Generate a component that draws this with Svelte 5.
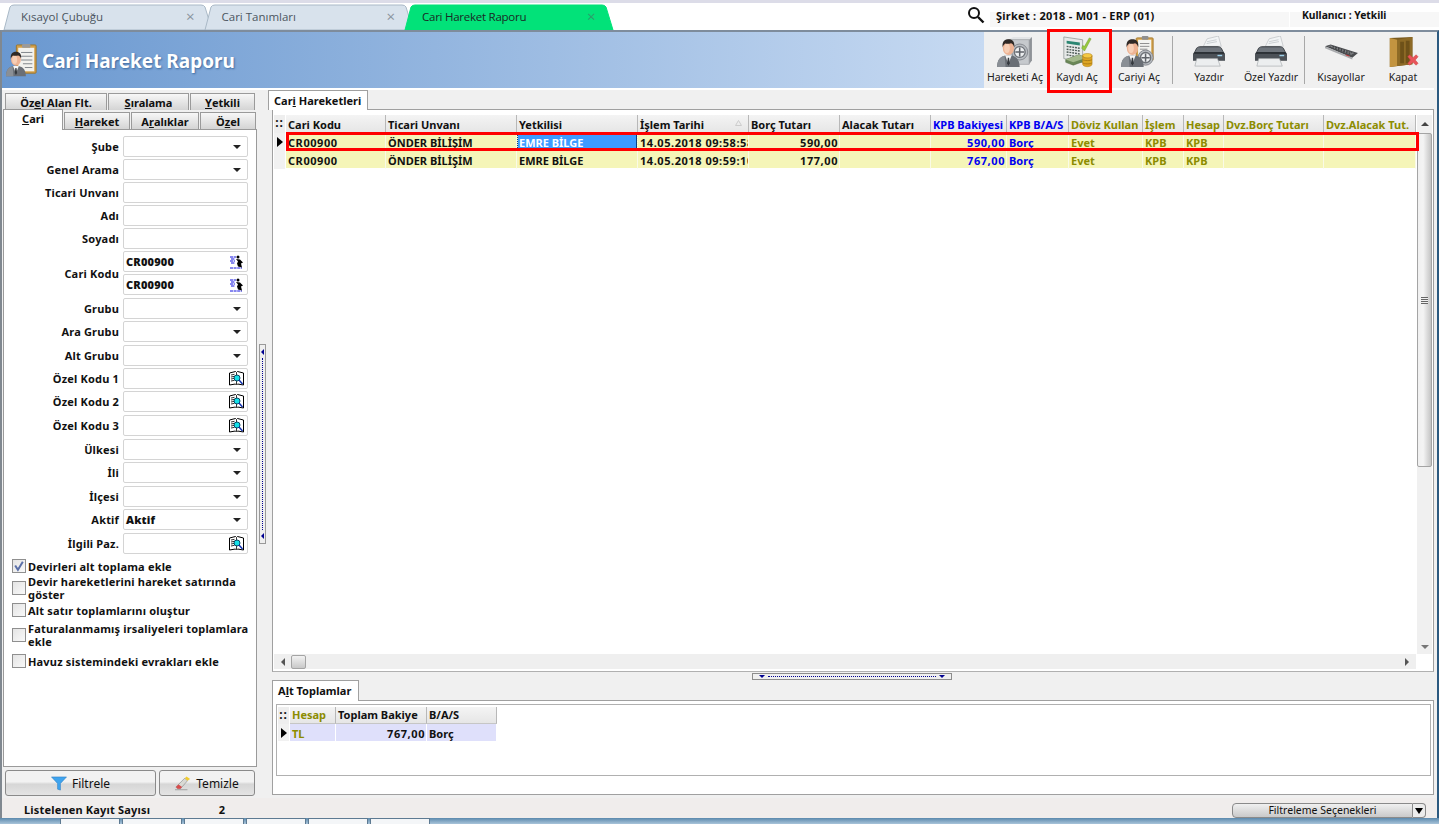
<script>
  const topTabs = [
    { label: 'Kısayol Çubuğu' },
    { label: 'Cari Tanımları' },
    { label: 'Cari Hareket Raporu', active: true }
  ];

  const tools = [
    { label: 'Hareketi Aç', icon: 'safe' },
    { label: 'Kaydı Aç', icon: 'record', marked: true },
    { label: 'Cariyi Aç', icon: 'clipboard' },
    { sep: true },
    { label: 'Yazdır', icon: 'printer' },
    { label: 'Özel Yazdır', icon: 'printer' },
    { sep: true },
    { label: 'Kısayollar', icon: 'keyboard' },
    { label: 'Kapat', icon: 'door' }
  ];

  const fields = [
    { label: 'Şube', kind: 'combo' },
    { label: 'Genel Arama', kind: 'combo' },
    { label: 'Ticari Unvanı' },
    { label: 'Adı' },
    { label: 'Soyadı' },
    { label: 'Cari Kodu', kind: 'pair' },
    { label: 'Grubu', kind: 'combo', extra: true },
    { label: 'Ara Grubu', kind: 'combo' },
    { label: 'Alt Grubu', kind: 'combo', extra: true },
    { label: 'Özel Kodu 1', kind: 'book' },
    { label: 'Özel Kodu 2', kind: 'book' },
    { label: 'Özel Kodu 3', kind: 'book', extra: true },
    { label: 'Ülkesi', kind: 'combo', extra: true },
    { label: 'İli', kind: 'combo' },
    { label: 'İlçesi', kind: 'combo', extra: true },
    { label: 'Aktif', kind: 'combo', value: 'Aktif' },
    { label: 'İlgili Paz.', kind: 'book', extra: true }
  ];

  const checks = [
    { label: 'Devirleri alt toplama ekle', on: true },
    { label: 'Devir hareketlerini hareket satırında göster' },
    { label: 'Alt satır toplamlarını oluştur' },
    { label: 'Faturalanmamış irsaliyeleri toplamlara ekle' },
    { label: 'Havuz sistemindeki evrakları ekle' }
  ];

  const columns = [
    { title: 'Cari Kodu', key: 'kod', num: true },
    { title: 'Ticari Unvanı', key: 'unvan' },
    { title: 'Yetkilisi', key: 'yetkili' },
    { title: 'İşlem Tarihi', key: 'tarih', sort: true, num: true },
    { title: 'Borç Tutarı', key: 'borc', right: true, num: true },
    { title: 'Alacak Tutarı', key: 'alacak', right: true },
    { title: 'KPB Bakiyesi', key: 'bakiye', right: true, tone: 'blue', num: true },
    { title: 'KPB B/A/S', key: 'bas', tone: 'blue' },
    { title: 'Döviz Kullan', key: 'doviz', tone: 'olive' },
    { title: 'İşlem', key: 'islem', tone: 'olive' },
    { title: 'Hesap', key: 'hesap', tone: 'olive' },
    { title: 'Dvz.Borç Tutarı', key: 'dvzb', tone: 'olive' },
    { title: 'Dvz.Alacak Tut.', key: 'dvza', tone: 'olive' }
  ];

  const rows = [
    { kod: 'CR00900', unvan: 'ÖNDER BİLİŞİM', yetkili: 'EMRE BİLGE', tarih: '14.05.2018 09:58:58', borc: '590,00', bakiye: '590,00', bas: 'Borç', doviz: 'Evet', islem: 'KPB', hesap: 'KPB' },
    { kod: 'CR00900', unvan: 'ÖNDER BİLİŞİM', yetkili: 'EMRE BİLGE', tarih: '14.05.2018 09:59:10', borc: '177,00', bakiye: '767,00', bas: 'Borç', doviz: 'Evet', islem: 'KPB', hesap: 'KPB' }
  ];
</script>

{#snippet person(x, y, s)}
  <g transform="translate({x} {y}) scale({s})">
    <path d="M0 31c0-7 3-11 8-12l4-1 4 1c5 1 8 5 8 12z" fill="#6a6f76" />
    <path d="M0 31c0-7 3-11 8-12l1 12z" fill="#8a8f95" />
    <path d="M8.500 18.500l3.500 9 3.500-9z" fill="#f6f6f6" />
    <path d="M11.300 21h1.400l.7 6-1.400 2.500-1.400-2.500z" fill="#34383d" />
    <ellipse cx="12" cy="10.500" rx="6" ry="7.800" fill="#eeb394" />
    <ellipse cx="10.500" cy="11" rx="3" ry="5" fill="#f7cfb6" />
    <path d="M5.800 10C5 3 9 1.500 12 1.500s7.200 1.400 6.200 8.500c-.8-2.500-1.800-3.800-3.400-4.200-2.500.8-5.500.5-6.300.2-.8.8-2.200 2-2.700 4z" fill="#2f2926" />
  </g>
{/snippet}

{#snippet disk(x, y, r)}
  <circle cx={x} cy={y} r={r} fill="#b8bcc1" stroke="#84888e" stroke-width="1" />
  <circle cx={x} cy={y} r={r * 0.68} fill="#eceef0" stroke="#6e7278" stroke-width="1.400" />
  <path d="M{x - r * 0.55} {y}h{r * 1.1}M{x} {y - r * 0.55}v{r * 1.1}" stroke="#5f6369" stroke-width="1.600" />
{/snippet}

{#snippet icon(name)}
  <svg class="tool-icon" viewBox="0 0 40 34" aria-hidden="true">
    {#if name === 'safe'}
      <path d="M13 4l5-3h20l-3 3z" fill="#e2e4e6" />
      <path d="M35 4l3-3v25l-3 4z" fill="#8f9398" />
      <rect x="13" y="4" width="22" height="26" fill="#c6c9cd" stroke="#93979c" stroke-width=".7" />
      {@render disk(25, 17, 8.500)}
      {@render person(1, 2, 1)}
    {:else if name === 'record'}
      <path d="M6 1l20 3v24L6 24z" fill="#e6e9e8" stroke="#8d9694" stroke-width=".8" />
      <path d="M9 5l14 2v3L9 8z" fill="#2b8672" />
      <path d="M9 11l14 2M9 14l14 2M9 17l14 2M9 20l11 2" stroke="#4f5c58" stroke-width="1.500" stroke-dasharray="2 1" />
      <path d="M25 13l3 3 7-13-2-1-5 9-2-1z" fill="#97c83e" stroke="#6b9a28" stroke-width=".5" />
      <path d="M8 25l14-5 8 3v3l-14 5-8-3z" fill="#6a8757" stroke="#4c6440" stroke-width=".5" />
      <path d="M8 25l14-5 8 3-14 5z" fill="#a3b98c" />
      <ellipse cx="31" cy="21" rx="5" ry="2.400" fill="#f3c843" stroke="#b4841a" stroke-width=".6" />
      <path d="M26 21v9c0 1.500 2.400 2.600 5 2.600s5-1.100 5-2.600v-9c0 1.500-2.400 2.500-5 2.500s-5-1-5-2.500z" fill="#dda523" stroke="#b4841a" stroke-width=".6" />
      <path d="M26 25c1 1.500 9 1.500 10 0M26 28.500c1 1.500 9 1.500 10 0" stroke="#a97a14" fill="none" />
    {:else if name === 'clipboard'}
      <rect x="17" y="2" width="18" height="24" rx="1" fill="#d4a24c" stroke="#a67a2c" />
      <rect x="19" y="4" width="14" height="20" fill="#f4f4f0" />
      <rect x="23" y="0" width="7" height="4" rx="1" fill="#8f8f8f" />
      <path d="M21 8h10M21 11h10M21 14h8" stroke="#8a8a8a" />
      {@render disk(27, 23, 8)}
      {@render person(1, 2, 1)}
    {:else if name === 'printer'}
      <path d="M14 11L18 3 30 0l3 11z" fill="#f2f4f5" stroke="#b0b4b8" stroke-width=".6" />
      <path d="M18 6l10-2M17.500 8l11-2" stroke="#c9cdd0" />
      <path d="M5 16c1-3 3-5 6-5h18c3 0 5 2 6 5l2 3v7H3v-7z" fill="#2c3136" />
      <path d="M8 12h24l3 5H5z" fill="#6f757c" />
      <path d="M3 19h34v7H3z" fill="#4c5157" />
      <path d="M7 24h22l3 8H5z" fill="#eceeef" stroke="#9a9ea2" stroke-width=".6" />
      <rect x="29" y="20" width="5" height="1.500" fill="#9cd0ea" />
    {:else if name === 'keyboard'}
      <path d="M3 11l6-2 29 9-6 5z" fill="#4b4d50" />
      <path d="M6 11l3-1 25 8-3 2z" fill="#8a8c8f" />
      <path d="M8 11.500l23 7.500M11 11l21 7" stroke="#2f3032" stroke-dasharray="2 1" />
      <path d="M3 11v2l29 12v-2z" fill="#a9abae" />
      <path d="M25 20l4 1.500" stroke="#c33" />
    {:else if name === 'door'}
      <path d="M6 2l24-1v29l-24 3z" fill="#7a5a1e" />
      <path d="M6 2l8 2v28l-8 1z" fill="#c39440" />
      <path d="M14 4l16-3v29l-16 2z" fill="#8d6a26" />
      <path d="M17 6h4v23h-4zM23 5h4v24h-4z" fill="#6e5119" />
      <path d="M27 20l3.500 3 3.500-3 2 2-3 3.500 3 3.500-2 2-3.500-3-3.500 3-2-2 3-3.500-3-3.500z" fill="#e8555a" stroke="#cc3a3a" stroke-width=".5" />
    {/if}
  </svg>
{/snippet}

{#snippet bookIcon()}
  <svg class="mini" viewBox="0 0 15 15" aria-hidden="true">
    <path d="M.5 2l6-1.500 1 1 1-1 6 1.500v12l-6-1-1 1-1-1-6 1z" fill="#fff" stroke="#000" />
    <path d="M7.500 2v11M2 4l3.500-.7M2 6l3.500-.7M2 8l3.500-.7M2 10l3.500-.7" stroke="#000" stroke-width=".8" />
    <circle cx="8" cy="7" r="3" fill="#14e0e8" stroke="#0a4a66" />
    <path d="M10 9l3.500 4" stroke="#1030b0" stroke-width="1.500" />
  </svg>
{/snippet}

{#snippet runnerIcon()}
  <svg class="mini" viewBox="0 0 15 15" aria-hidden="true">
    <path d="M1 3h6M2 5h4M1 7h5M2 9h4M1 14h12" stroke="#1010e0" stroke-dasharray="3 .6" />
    <circle cx="9" cy="3" r="1.500" fill="#000" />
    <path d="M7 5l4 .5 3 3-2 1 1 4-4-1-1-3 1-2z" fill="#000" />
  </svg>
{/snippet}

<div class="app">
  <header class="tabstrip">
    <nav class="tabs">
      {#each topTabs as tab}
        <div class="tab" class:active={tab.active}>
          <svg class="tab-shape" viewBox="0 0 214 26" aria-hidden="true">
            <path d="M1 26L7 3Q8 1 11 1H198Q201 1 202 3L209 26Z" />
          </svg>
          <span class="tab-label">{tab.label}</span>
          <span class="tab-x">×</span>
        </div>
      {/each}
    </nav>
    <div class="session">
      <svg class="search" viewBox="0 0 18 18" aria-hidden="true">
        <circle cx="7" cy="7" r="5" fill="none" stroke="#111" stroke-width="2" />
        <path d="M11 11l5.500 5.500" stroke="#111" stroke-width="2.400" />
      </svg>
      <div class="company">Şirket : 2018 - M01 - ERP (01)</div>
      <div class="user">Kullanıcı : Yetkili</div>
    </div>
  </header>

  <div class="window">
    <div class="titlebar">
      <div class="title">
        <svg class="title-icon" viewBox="0 0 34 34" aria-hidden="true">
          <rect x="11" y="1" width="21" height="30" rx="1" fill="#d3a04a" stroke="#9a742c" />
          <rect x="13" y="4" width="17" height="25" fill="#f2f2ee" />
          <rect x="17" y="0" width="9" height="4" rx="1" fill="#9a9a9a" />
          <path d="M16 9h12M16 13h12M16 17h12M18 21h10M20 25h8" stroke="#7d8286" />
          {@render person(0, 7, 0.88)}
        </svg>
        <h1>Cari Hareket Raporu</h1>
      </div>
      <div class="toolbar">
        {#each tools as tool}
          {#if tool.sep}
            <span class="tool-sep"></span>
          {:else}
            <div class="tool" class:marked={tool.marked}>
              {@render icon(tool.icon)}
              <span>{tool.label}</span>
            </div>
          {/if}
        {/each}
      </div>
    </div>

    <div class="body">
      <aside class="filters">
        <div class="ftabs ftabs-back">
          <div class="ftab w1">Öz<u>e</u>l Alan Flt.</div>
          <div class="ftab w2"><u>S</u>ıralama</div>
          <div class="ftab w3"><u>Y</u>etkili</div>
        </div>
        <div class="ftabs ftabs-front">
          <div class="ftab current"><u>C</u>ari</div>
          <div class="ftab w4"><u>H</u>areket</div>
          <div class="ftab w5">A<u>r</u>alıklar</div>
          <div class="ftab w6">Ö<u>z</u>el</div>
        </div>

        <div class="fpanel">
          <div class="form">
            {#each fields as field}
              <div class="frow" class:pair={field.kind === 'pair'} class:extra={field.extra}>
                <label>{field.label}</label>
                {#if field.kind === 'pair'}
                  <div class="stack">
                    <div class="input"><b>CR00900</b>{@render runnerIcon()}</div>
                    <div class="input"><b>CR00900</b>{@render runnerIcon()}</div>
                  </div>
                {:else}
                  <div class="input">
                    <b>{field.value ?? ''}</b>
                    {#if field.kind === 'combo'}<i class="caret"></i>{/if}
                    {#if field.kind === 'book'}{@render bookIcon()}{/if}
                  </div>
                {/if}
              </div>
            {/each}
          </div>

          <div class="checks">
            {#each checks as check}
              <div class="check">
                <span class="box">
                  {#if check.on}
                    <svg viewBox="0 0 11 11" aria-hidden="true"><path d="M2 5l2.500 4L9 1.500" fill="none" stroke="#5a6fa8" stroke-width="1.800" /></svg>
                  {/if}
                </span>
                <span>{check.label}</span>
              </div>
            {/each}
          </div>
        </div>

        <div class="actions">
          <button class="filter-btn">
            <svg viewBox="0 0 16 16" aria-hidden="true"><path d="M0 1h16L9.500 8v7l-3-1V8z" fill="#3fa4ee" stroke="#2a7cc4" stroke-width=".6" /></svg>
            Filtrele
          </button>
          <button class="clear-btn">
            <svg viewBox="0 0 18 16" aria-hidden="true">
              <path d="M1 12L11 2l3 3-8 9H3z" fill="#d9d9d4" stroke="#777" stroke-width=".6" />
              <path d="M11 2l2-2 4 3-3 2z" fill="#f0cc30" />
              <path d="M1 12l3-3 4 3-2 2H3z" fill="#d84c4c" />
              <path d="M0 15h14" stroke="#999" />
            </svg>
            Temizle
          </button>
        </div>
      </aside>

      <div class="vsplit">
        <div class="vsplit-handle">
          <i class="tri-left"></i>
          <span class="dots-v"></span>
          <i class="tri-left"></i>
        </div>
      </div>

      <main class="main">
        <div class="ptab ptab-top">Car<u>i</u> Hareketleri</div>
        <section class="grid-frame">
          <div class="grid">
            <div class="grid-table">
              <div class="hrow">
                <div class="ind head-ind">::</div>
                {#each columns as col}
                  <div class="hcell {col.tone ?? ''}">
                    {col.title}
                    {#if col.sort}<svg class="sort" viewBox="0 0 7 6" aria-hidden="true"><path d="M3.500.5L6.500 5.500H.5z" fill="none" stroke="#ccc" /></svg>{/if}
                  </div>
                {/each}
              </div>
              {#each rows as row, r}
                <div class="drow" class:focus={r === 0}>
                  <div class="ind">{#if r === 0}<i class="pointer"></i>{/if}</div>
                  {#each columns as col}
                    <div class="dcell {col.tone ?? ''}" class:right={col.right} class:num={col.num} class:sel={r === 0 && col.key === 'yetkili'}>{row[col.key] ?? ''}</div>
                  {/each}
                </div>
              {/each}
            </div>
            <div class="vbar">
              <div class="sb-btn"><i class="tri-up"></i></div>
              <div class="vthumb"><span class="grip"></span></div>
              <div class="sb-btn end"><i class="tri-down"></i></div>
            </div>
          </div>
          <div class="hbar">
            <i class="tri-l"></i>
            <div class="hthumb"></div>
            <i class="tri-r"></i>
          </div>
        </section>

        <div class="hsplit">
          <div class="hsplit-handle">
            <i class="tri-blue"></i>
            <span class="dots-h"></span>
            <i class="tri-blue"></i>
          </div>
        </div>

        <div class="ptab ptab-low">A<u>l</u>t Toplamlar</div>
        <section class="totals-frame">
          <div class="totals">
            <div class="trow thead">
              <div class="ind head-ind">::</div>
              <div class="hcell olive">Hesap</div>
              <div class="hcell">Toplam Bakiye</div>
              <div class="hcell">B/A/S</div>
            </div>
            <div class="trow tdata">
              <div class="ind"><i class="pointer"></i></div>
              <div class="dcell olive">TL</div>
              <div class="dcell right num">767,00</div>
              <div class="dcell">Borç</div>
            </div>
          </div>
        </section>
      </main>
    </div>

    <footer class="status">
      <div class="count-label">Listelenen Kayıt Sayısı</div>
      <div class="count">2</div>
      <div class="options">
        <div class="options-btn">Filtreleme Seçenekleri</div>
        <div class="options-arrow"><i></i></div>
      </div>
    </footer>
  </div>

  <div class="taskstrip">
    <div class="task-start"></div>
    {#each Array(6) as _}
      <div class="task"></div>
    {/each}
  </div>
</div>

<style>
  :global(body) {
    margin: 0;
    background: #f0f0f0;
  }
  .app {
    display: flex;
    flex-direction: column;
    width: 1439px;
    height: 824px;
    overflow: hidden;
    font: 700 11px/13px "Noto Sans", "Liberation Sans", sans-serif;
    color: #111;
  }
  u { text-underline-offset: 1px; }

  /* top tabs */
  .tabstrip {
    display: flex;
    justify-content: space-between;
    height: 30px;
    flex: none;
    box-sizing: border-box;
    background: #fff;
    border-top: 3px solid #dcdce8;
  }
  .tabs {
    display: flex;
    margin-left: 3px;
    padding-top: 1px;
  }
  .tab {
    position: relative;
    width: 200.500px;
    height: 26px;
    font: 400 11.500px/26px "Open Sans", "Noto Sans", sans-serif;
    color: #4b5560;
  }
  .tab-shape {
    position: absolute;
    left: 0;
    top: 0;
    width: 214px;
    height: 26px;
    fill: #d8e2ec;
    stroke: #a9b8c6;
  }
  .tab.active .tab-shape {
    fill: #02e279;
    stroke: #02e279;
  }
  .tab.active { color: #1a2a25; letter-spacing: -.25px; }
  .tab-label {
    position: absolute;
    left: 18px;
    top: 0;
  }
  .tab-x {
    position: absolute;
    left: 183px;
    top: -1px;
    font-size: 15px;
    color: #8a949e;
  }
  .tab.active .tab-x { color: #2e9e6b; }
  .session {
    display: flex;
    align-items: flex-start;
    width: 482px;
    background: #fff;
  }
  .search {
    width: 18px;
    height: 18px;
    margin: 3px 5px 0 10px;
    flex: none;
  }
  .company, .user {
    height: 18px;
    margin-top: 6px;
    background: linear-gradient(#fff 3px, #f7f7f7 3px);
  }
  .company {
    width: 299px;
    padding-left: 6px;
    box-sizing: border-box;
    letter-spacing: .25px;
  }
  .user {
    flex: 1;
    padding-left: 12px;
    margin-left: 1px;
    font-size: 10.300px;
  }

  /* window */
  .window {
    display: flex;
    flex-direction: column;
    flex: 1;
    min-height: 0;
    border-top: 2px solid #7e8c9c;
    border-left: 2px solid #808890;
    border-right: 2px solid #2c5a80;
    background: #f0f0f0;
  }
  .titlebar {
    display: flex;
    height: 56px;
    flex: none;
    margin-right: 3px;
    background: #f0f0f0;
    border-bottom: 2px solid #fff;
  }
  .title {
    display: flex;
    align-items: center;
    flex: 1;
    gap: 4px;
    padding-left: 4px;
    background: linear-gradient(90deg, #6a98d0, #c7daf2);
  }
  .title-icon { width: 32px; height: 34px; }
  h1 {
    margin: 2px 0 0;
    font: 700 19px/24px "Noto Sans", sans-serif;
    color: #fff;
    text-shadow: 1px 1px 2px #3f6a9f;
  }
  .toolbar {
    display: flex;
    width: 450px;
    flex: none;
  }
  .tool {
    position: relative;
    display: flex;
    flex-direction: column;
    align-items: center;
    width: 62px;
    flex: none;
    padding-top: 4px;
    box-sizing: border-box;
    font: 400 10.500px/13px "Noto Sans", sans-serif;
    color: #222;
  }
  .tool-icon {
    width: 38px;
    height: 32px;
    margin-bottom: 1px;
  }
  .tool span { margin-top: 2px; white-space: nowrap; }
  .tool.marked::after {
    content: "";
    position: absolute;
    left: 1px;
    right: -4px;
    top: -3px;
    bottom: -5px;
    border: 3px solid #f00;
  }
  .tool-sep {
    width: 1px;
    height: 48px;
    margin: 4px 5px 0 2px;
    background: #a8a8a8;
    flex: none;
  }

  .body {
    display: flex;
    flex: 1;
    min-height: 0;
  }

  /* filter panel */
  .filters {
    display: flex;
    flex-direction: column;
    width: 254px;
    margin-left: 1px;
    padding-top: 3px;
    flex: none;
  }
  .ftabs { display: flex; }
  .ftabs-back { padding-left: 2px; gap: 1px; height: 17px; }
  .ftabs-front { height: 20px; margin-top: -1px; gap: 1px; }
  .ftab {
    display: flex;
    align-items: center;
    justify-content: center;
    box-sizing: border-box;
    height: 17px;
    border: 1px solid #9a9a9a;
    border-bottom: 0;
    background: linear-gradient(#f7f7f7, #d4d4d4);
  }
  .ftabs-front .ftab { margin-top: 3px; }
  .ftabs-front .ftab.current {
    position: relative;
    z-index: 1;
    width: 60px;
    height: 21px;
    margin-top: 0;
    padding-bottom: 3px;
    background: #fff;
  }
  .w1 { width: 102px; }
  .w2 { width: 81px; }
  .w3 { width: 65px; }
  .w4 { width: 66px; }
  .w5 { width: 68px; }
  .w6 { width: 56px; }
  .fpanel {
    flex: 1;
    min-height: 0;
    background: #fff;
    border: 1px solid #9a9a9a;
    box-sizing: border-box;
    padding-top: 6px;
    letter-spacing: .18px;
  }
  .form {
    display: flex;
    flex-direction: column;
    gap: 2px;
  }
  .frow {
    display: flex;
    align-items: center;
    gap: 4px;
  }
  .frow.extra { margin-top: 1px; }
  label {
    width: 115px;
    text-align: right;
    flex: none;
    white-space: nowrap;
  }
  .stack {
    display: flex;
    flex-direction: column;
    gap: 2px;
  }
  .input {
    display: flex;
    align-items: center;
    justify-content: space-between;
    box-sizing: border-box;
    width: 125px;
    height: 21px;
    padding: 0 3px 0 2px;
    border: 1px solid #d4d4d4;
    border-radius: 2px;
    background: #fff;
  }
  .caret {
    border: 4px solid transparent;
    border-top: 4px solid #222;
    border-bottom: 0;
    margin-right: 3px;
  }
  .mini { width: 15px; height: 15px; flex: none; }
  .checks {
    display: grid;
    grid-template-rows: 20.500px 22px 23.500px 25.500px 27px;
    margin-top: 2px;
    padding-left: 8px;
    padding-right: 6px;
  }
  .check {
    display: flex;
    align-items: center;
    gap: 2px;
    line-height: 13px;
  }
  .box {
    flex: none;
    width: 12px;
    height: 12px;
    border: 1px solid #8f8f8f;
    background: linear-gradient(135deg, #e4e4e4, #f9f9f9);
  }
  .box svg { display: block; }
  .actions {
    display: flex;
    gap: 3px;
    height: 31px;
    padding-top: 3px;
    padding-left: 2px;
    box-sizing: border-box;
    flex: none;
  }
  button {
    display: flex;
    align-items: center;
    justify-content: center;
    gap: 5px;
    height: 26px;
    padding: 0;
    border: 1px solid #8a8a8a;
    border-radius: 3px;
    background: linear-gradient(#f2f2f2 45%, #d6d6d6 55%, #e4e4e4);
    font: 400 12px "Noto Sans", sans-serif;
    color: #111;
  }
  button svg { width: 16px; height: 15px; }
  .filter-btn { width: 151px; }
  .clear-btn { width: 96px; }

  /* splitters */
  .vsplit {
    display: flex;
    align-items: center;
    justify-content: center;
    width: 11px;
    flex: none;
  }
  .vsplit-handle {
    display: flex;
    flex-direction: column;
    align-items: center;
    justify-content: space-between;
    width: 7px;
    height: 200px;
    padding: 4px 0;
    box-sizing: border-box;
    border: 1px solid #999;
    background: #efefef;
  }
  .tri-left {
    border: 3px solid transparent;
    border-right: 3px solid #000090;
    border-left: 0;
  }
  .dots-v {
    flex: 1;
    margin: 3px 0;
    border-left: 1px dotted #000090;
  }

  /* main */
  .main {
    display: flex;
    flex-direction: column;
    flex: 1;
    min-width: 0;
    margin-right: 3px;
  }
  .ptab {
    position: relative;
    z-index: 1;
    align-self: flex-start;
    box-sizing: border-box;
    height: 20px;
    margin-bottom: -1px;
    padding: 0 5px;
    line-height: 19px;
    white-space: nowrap;
    background: #fff;
    border: 1px solid #a0a0a0;
    border-bottom: 0;
  }
  .ptab-top { width: 100px; }
  .ptab-low { margin-left: 4px; width: 87px; height: 21px; }
  .grid-frame {
    display: flex;
    flex-direction: column;
    height: 563px;
    flex: none;
    box-sizing: border-box;
    margin-left: 4px;
    padding: 5px 1px 2px 1px;
    border: 1px solid #a0a0a0;
    border-bottom-color: #b0b0b0;
    background: #fff;
  }
  .grid {
    display: flex;
    flex: 1;
    min-height: 0;
  }
  .grid-table { flex: 1; min-width: 0; }
  .hrow, .drow {
    display: grid;
    grid-template-columns: 12px 100px 131px 121px 111px 91px 91px 76px 62px 74px 41px 40px 100px 92px;
    height: 18px;
  }
  .ind {
    display: flex;
    align-items: center;
    justify-content: center;
    background: #f1f1f1;
    border-right: 1px solid #fff;
  }
  .head-ind {
    box-sizing: border-box;
    padding-bottom: 3px;
    font-size: 12px;
    letter-spacing: 1px;
    background: #eee;
  }
  .pointer {
    border: 5px solid transparent;
    border-left: 6px solid #000;
    border-right: 0;
  }
  .hcell {
    position: relative;
    padding: 3px 0 0 2px;
    overflow: hidden;
    white-space: nowrap;
    box-sizing: border-box;
    background: linear-gradient(#f4f4f4, #e6e6e6);
    border-right: 1px solid #b8b8b8;
    border-bottom: 1px solid #c6c6c6;
  }
  .thead .hcell { padding-top: 1px; }
  .sort {
    position: absolute;
    right: 6px;
    top: 5px;
    width: 7px;
    height: 6px;
  }
  .dcell {
    padding: 3px 2px 0 2px;
    overflow: hidden;
    white-space: nowrap;
    box-sizing: border-box;
    background: #f5f5b8;
    border-right: 1px solid #fafae6;
  }
  .num { letter-spacing: .55px; }
  .drow .dcell { border-bottom: 1px solid #fff; }
  .dcell.right { text-align: right; padding-right: 1px; }
  .blue { color: #0000f0; }
  .olive { color: #8c8c00; }
  .sel {
    background: #3d9bff;
    color: #fff;
    box-shadow: inset 0 0 0 1px #0a3f80;
    outline: 1px dotted #f5f5b8;
    outline-offset: -1px;
  }
  .drow.focus { position: relative; }
  .drow.focus::after {
    content: "";
    position: absolute;
    left: 12px;
    right: -2px;
    top: -1px;
    bottom: 0;
    border: 3px solid #f00;
    pointer-events: none;
  }

  /* scrollbars */
  .vbar {
    display: flex;
    flex-direction: column;
    width: 15px;
    flex: none;
    background: #f0f0f0;
  }
  .sb-btn {
    display: flex;
    align-items: center;
    justify-content: center;
    height: 18px;
    flex: none;
  }
  .sb-btn.end { margin-top: auto; height: 15px; }
  .tri-up {
    border: 4px solid transparent;
    border-bottom: 4px solid #444;
    border-top: 0;
  }
  .tri-down {
    border: 4px solid transparent;
    border-top: 4px solid #777;
    border-bottom: 0;
  }
  .vthumb {
    display: flex;
    align-items: center;
    justify-content: center;
    height: 334px;
    flex: none;
    box-sizing: border-box;
    border: 1px solid #a4a4a4;
    border-radius: 2px;
    background: linear-gradient(90deg, #f0f0f0, #f4f4f4 40%, #c4c4c4);
  }
  .grip {
    width: 7px;
    height: 7px;
    background: repeating-linear-gradient(#666 0 1px, #f0f0f0 1px 2px);
  }
  .hbar {
    display: flex;
    align-items: center;
    height: 15px;
    flex: none;
    margin-right: 16px;
    padding-left: 7px;
    background: #efefef;
  }
  .tri-l {
    border: 4px solid transparent;
    border-right: 4px solid #555;
    border-left: 0;
  }
  .tri-r {
    border: 4px solid transparent;
    border-left: 4px solid #555;
    border-right: 0;
    margin-left: auto;
    margin-right: 7px;
  }
  .hthumb {
    width: 15px;
    height: 14px;
    margin-left: 6px;
    box-sizing: border-box;
    border: 1px solid #a4a4a4;
    border-radius: 2px;
    background: linear-gradient(#f2f2f2, #c8c8c8);
  }
  .hsplit {
    display: flex;
    justify-content: center;
    height: 8px;
    flex: none;
    padding: 1px 0 0 4px;
    box-sizing: border-box;
    margin-right: 2px;
  }
  .hsplit-handle {
    display: flex;
    align-items: center;
    justify-content: space-between;
    gap: 3px;
    width: 200px;
    height: 7px;
    padding: 0 6px;
    box-sizing: border-box;
    border: 1px solid #8c8c8c;
    background: #efefef;
  }
  .tri-blue {
    border: 3px solid transparent;
    border-top: 3px solid #000090;
    border-bottom: 0;
  }
  .dots-h {
    flex: 1;
    border-top: 1px dotted #000090;
  }
  .totals-frame {
    flex: 1;
    min-height: 0;
    margin: 0 0 3px 4px;
    padding: 3px 2px 18px 3px;
    background: #fff;
    border: 1px solid #a0a0a0;
    box-sizing: border-box;
  }
  .totals {
    height: 100%;
    box-sizing: border-box;
    border: 1px solid #b0b0b0;
    padding: 2px 0 0 1px;
  }
  .trow {
    display: grid;
    grid-template-columns: 12px 46px 91px 70px;
    width: 219px;
    height: 17px;
  }
  .tdata .dcell {
    background: #dfe0fb;
    border-right: 1px solid #fff;
  }

  /* status */
  .status {
    display: flex;
    align-items: center;
    height: 20px;
    flex: none;
    padding-top: 2px;
    box-sizing: border-box;
    background: #f0edec;
  }
  .count-label {
    width: 128px;
    margin-left: 22px;
    white-space: nowrap;
    letter-spacing: .18px;
  }
  .count {
    width: 73px;
    text-align: right;
  }
  .options {
    display: flex;
    align-self: flex-end;
    margin-left: auto;
    margin-right: 11px;
    height: 15px;
  }
  .options-btn {
    width: 181px;
    box-sizing: border-box;
    border: 1px solid #8a8a8a;
    border-radius: 4px 0 0 4px;
    background: linear-gradient(#f0f0f0, #c9c9c9);
    text-align: center;
    font: 400 10.500px/13px "Noto Sans", sans-serif;
  }
  .options-arrow {
    display: flex;
    align-items: center;
    justify-content: center;
    width: 13px;
    box-sizing: border-box;
    border: 1px solid #8a8a8a;
    border-left: 0;
    border-radius: 0 4px 4px 0;
    background: #ececec;
  }
  .options-arrow i {
    border: 4px solid transparent;
    border-top: 6px solid #000;
    border-bottom: 0;
  }

  .taskstrip {
    display: flex;
    height: 6px;
    flex: none;
    background: linear-gradient(#5b89ad, #a9c4da);
  }
  .task-start { width: 60px; }
  .task {
    width: 60px;
    margin-right: 2px;
    background: #f4f6f8;
    border: 1px solid #5d7a92;
    border-bottom: 0;
    box-sizing: border-box;
  }
</style>
